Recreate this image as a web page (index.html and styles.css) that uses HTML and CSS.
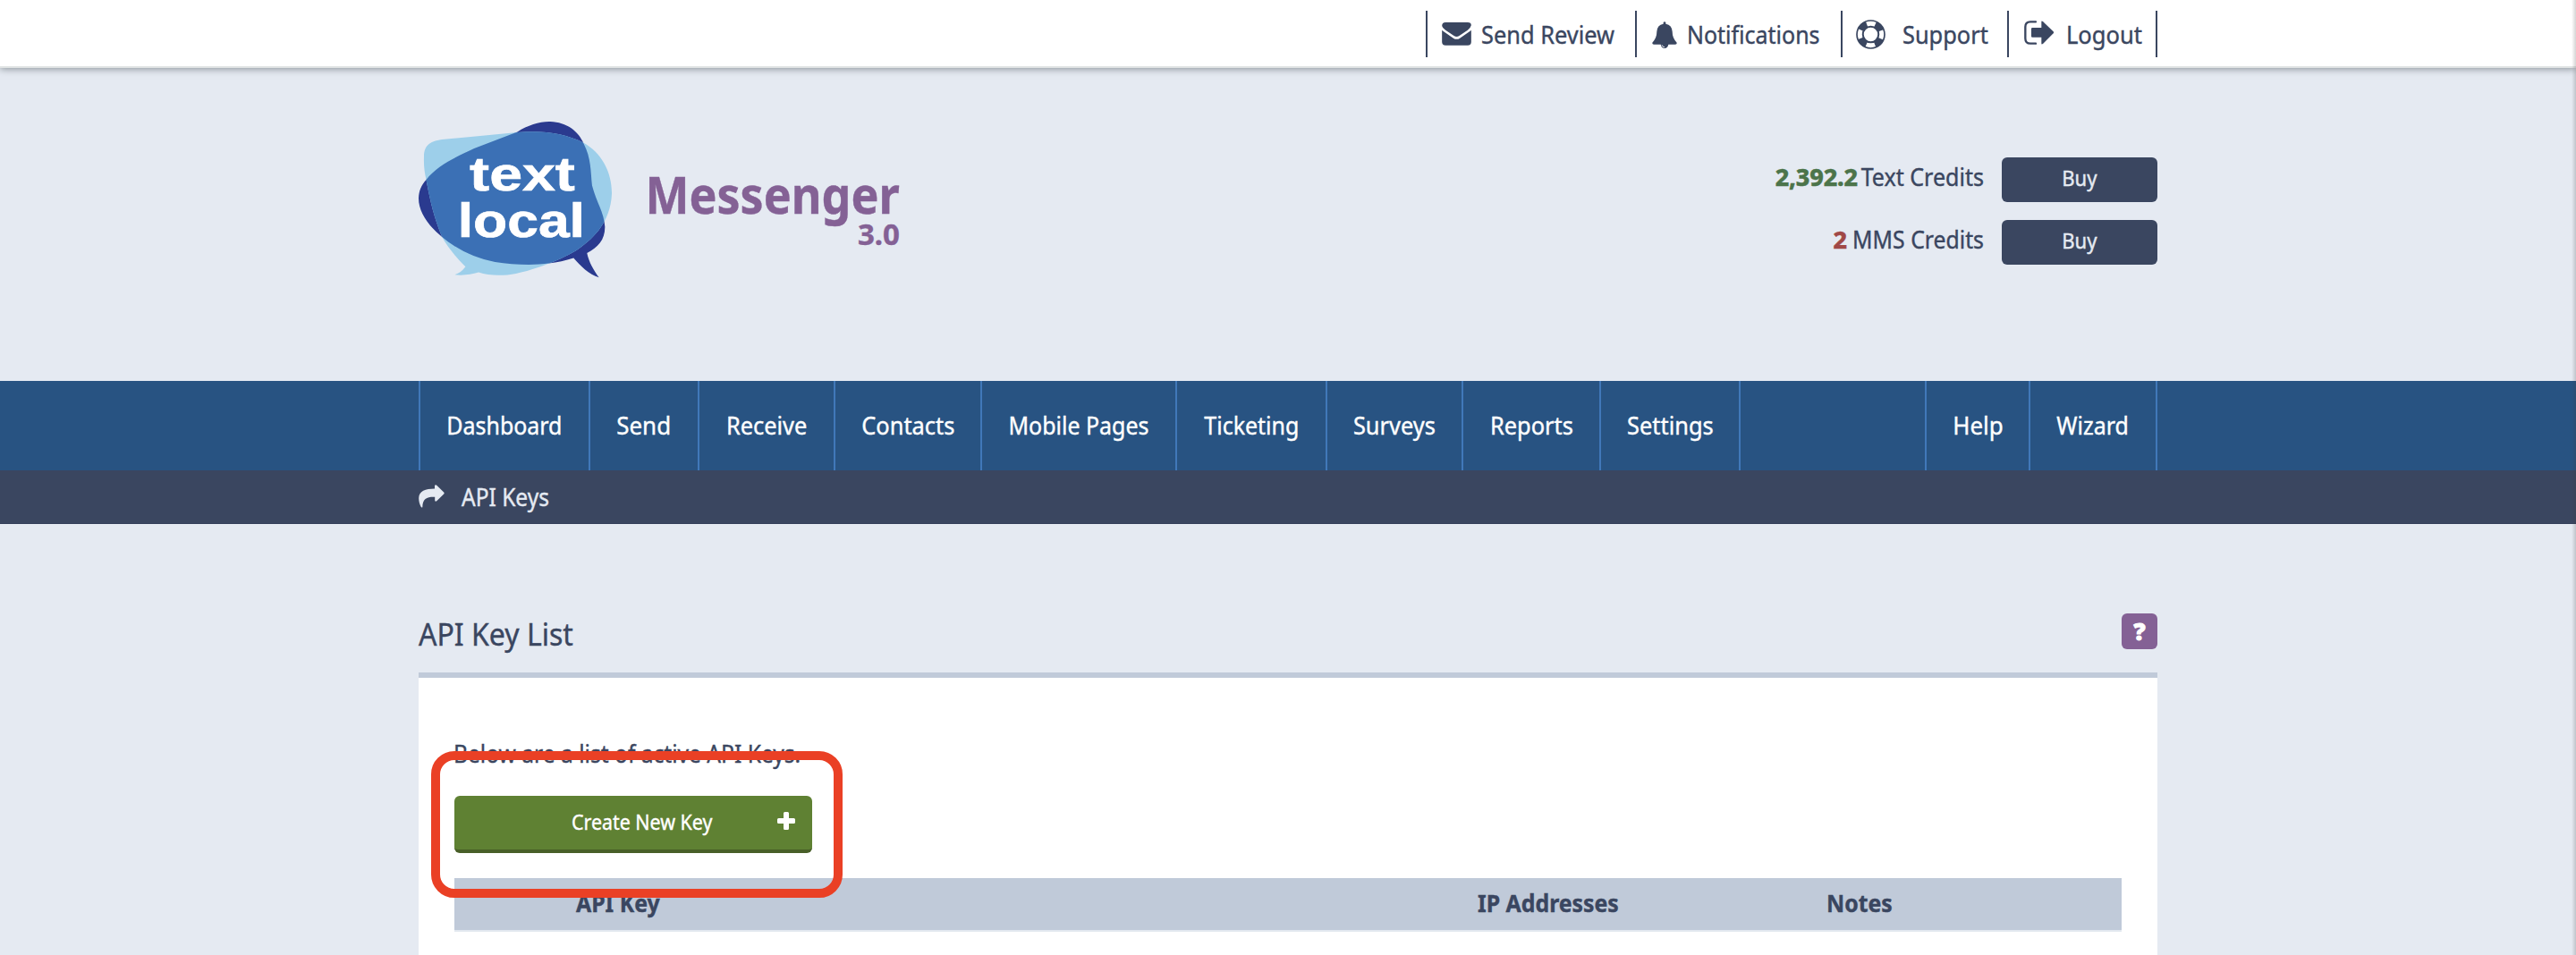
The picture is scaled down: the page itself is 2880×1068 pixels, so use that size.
FILE: index.html
```html
<!DOCTYPE html>
<html lang="en">
<head>
<meta charset="utf-8">
<title>API Keys</title>
<link rel="stylesheet" href="styles.css">
</head>
<body>
<header class="topbar">
  <div class="wrap topbar-inner">
    <a class="top-link review"><svg class="icon" width="33" height="26" viewBox="0 0 98 78"><path d="M0 12Q0 0 12 0H86Q98 0 98 10Q96 19 86 26L58 45Q49 51 40 45L12 26Q1 19 0 12ZM0 26Q4 30 10 34L38 53Q49 60 60 53L88 34Q94 30 98 26V66Q98 77 86 77H12Q0 77 0 66Z"/></svg><span class="t">Send Review</span></a>
    <a class="top-link notif"><svg class="icon" width="28" height="30" viewBox="0 0 84 90"><path d="M38 3Q42 -1 46 3V8Q67 12 68 34Q68 56 83 71Q84 77 78 77H55Q52 90 42 90Q32 90 29 77H6Q0 77 1 71Q16 56 16 34Q17 12 38 8Z"/><path class="clapper" d="M33 79Q35 86 42 86"/></svg><span class="t">Notifications</span></a>
    <a class="top-link support"><svg class="icon ring" width="33" height="33" viewBox="0 0 98 98"><circle cx="49" cy="49" r="46" stroke-width="5"/><circle cx="49" cy="49" r="26" stroke-width="6"/><circle cx="49" cy="49" r="36" stroke-width="22" stroke-dasharray="28 28.55" stroke-dashoffset="-14.27"/></svg><span class="t">Support</span></a>
    <a class="top-link logout"><svg class="icon" width="33" height="27" viewBox="0 0 99 81"><path class="door" d="M39 4H21Q4 4 4 21V60Q4 77 21 77H39"/><path d="M24 27Q24 24 28 24H58V4Q58 -1 63 3L98 37Q101 40 98 43L63 78Q58 81 58 77V56H28Q24 56 24 53Z"/></svg><span class="t">Logout</span></a>
  </div>
</header>

<div class="wrap brand">
  <svg class="logo" width="217" height="175" viewBox="54 48 650 524">
    <defs><clipPath id="front"><path d="M54 305C55 280 62 262 80 242C120 190 190 162 240 138L385 82C420 60 460 47 495 48C550 50 590 80 607 122C632 170 630 215 635 262C650 320 675 350 678 400C678 445 655 468 618 488C625 520 640 545 658 570C625 562 595 530 573 505C545 513 520 520 490 523C440 530 370 528 310 518C240 505 180 475 130 432C85 395 54 350 54 305Z"/></clipPath></defs>
    <path class="bubble-dark" d="M54 305C55 280 62 262 80 242C120 190 190 162 240 138L385 82C420 60 460 47 495 48C550 50 590 80 607 122C632 170 630 215 635 262C650 320 675 350 678 400C678 445 655 468 618 488C625 520 640 545 658 570C625 562 595 530 573 505C545 513 520 520 490 523C440 530 370 528 310 518C240 505 180 475 130 432C85 395 54 350 54 305Z"/>
    <path class="bubble-light" d="M72 165C72 125 95 112 140 107L385 84C470 76 545 88 605 118C665 150 702 215 701 290C697 380 645 435 590 474C540 508 440 545 380 557C340 565 290 565 255 553C230 560 205 564 175 561C190 556 200 548 211 534C180 505 150 465 133 435C105 370 90 300 80 245C73 215 71 195 72 165Z"/>
    <path class="bubble-mid" clip-path="url(#front)" d="M72 165C72 125 95 112 140 107L385 84C470 76 545 88 605 118C665 150 702 215 701 290C697 380 645 435 590 474C540 508 440 545 380 557C340 565 290 565 255 553C230 560 205 564 175 561C190 556 200 548 211 534C180 505 150 465 133 435C105 370 90 300 80 245C73 215 71 195 72 165Z"/>
    <text class="logo-text" x="225" y="280" textLength="353" lengthAdjust="spacingAndGlyphs">text</text>
    <text class="logo-text" x="185" y="434" textLength="426" lengthAdjust="spacingAndGlyphs">local</text>
  </svg>
  <div class="product"><span class="name">Messenger</span><span class="version">3.0</span></div>
  <div class="credits">
    <div class="credit-row"><strong class="good">2,392.2</strong><span class="credit-label">Text Credits</span><a class="buy"><span class="t">Buy</span></a></div>
    <div class="credit-row"><strong class="low">2</strong><span class="credit-label mms">MMS Credits</span><a class="buy"><span class="t">Buy</span></a></div>
  </div>
</div>

<nav class="mainnav">
  <div class="wrap nav-inner">
    <a class="w-dashboard"><span class="t tight">Dashboard</span></a>
    <a class="w-send"><span class="t wide">Send</span></a>
    <a class="w-receive"><span class="t">Receive</span></a>
    <a class="w-contacts"><span class="t">Contacts</span></a>
    <a class="w-mobile"><span class="t tight">Mobile Pages</span></a>
    <a class="w-ticketing"><span class="t tight">Ticketing</span></a>
    <a class="w-surveys"><span class="t">Surveys</span></a>
    <a class="w-reports"><span class="t">Reports</span></a>
    <a class="w-settings"><span class="t">Settings</span></a>
    <a class="w-help"><span class="t wide">Help</span></a>
    <a class="w-wizard"><span class="t tight">Wizard</span></a>
  </div>
</nav>
<div class="crumbs">
  <div class="wrap crumbs-inner">
    <svg class="crumb-icon" width="29" height="26" viewBox="467.5 542.5 29 26"><path d="M485.5 543.5Q486.5 542 488 543.5L495.7 551Q496.6 552 495.7 553L488 560.5Q486.5 562 485.7 560.5V556.3C477 556 472 558 471.8 567.7Q470.8 568.3 470 567C468.5 564 467.7 561 467.7 557.5C468 549.5 475 547.2 485.5 547Z"/></svg>
    <span class="t">API Keys</span>
  </div>
</div>

<main class="wrap">
  <div class="title-row">
    <h1 class="t">API Key List</h1>
    <a class="help"><span>?</span></a>
  </div>
  <section class="panel">
    <p class="intro t">Below are a list of active API Keys.</p>
    <div class="create-row">
      <a class="create"><span class="t">Create New Key</span><svg class="plus" width="20" height="20" viewBox="0 0 20 20"><path d="M8.500 0h3q1.500 0 1.500 1.500V7h5.500q1.500 0 1.500 1.500v3q0 1.500-1.500 1.500H13v5.500q0 1.500-1.500 1.500h-3Q7 20 7 18.500V13H1.500Q0 13 0 11.500v-3Q0 7 1.500 7H7V1.500Q7 0 8.500 0z"/></svg></a>
      <div class="highlight"></div>
    </div>
    <div class="table-head"><span class="t">API Key</span><span class="t">IP Addresses</span><span class="t">Notes</span></div>
  </section>
</main>
<div class="edge"></div>
</body>
</html>
```
FILE: styles.css
```css
* { box-sizing: border-box; }
body {
  margin: 0;
  height: 1068px;
  overflow: hidden;
  position: relative;
  background: #e5eaf2;
  color: #3a4660;
  font: 27px/1 "Noto Sans", "Open Sans", sans-serif;
  -webkit-text-stroke: .4px currentColor;
}
.wrap { width: 1944px; margin: 0 auto; }
.t {
  display: inline-block;
  white-space: nowrap;
  transform: scaleX(.94);
  transform-origin: left;
}
svg { display: block; flex: none; }

/* Top bar */
.topbar {
  height: 76px;
  background: #fff;
  border-bottom: 2px solid #e1e4e4;
  box-shadow: 0 1px 8px rgba(70, 80, 85, .6);
}
.topbar-inner { display: flex; justify-content: flex-end; padding-top: 12px; }
.top-link {
  display: flex;
  align-items: center;
  height: 52px;
  line-height: 51px;
  border-left: 2px solid #3a4660;
}
.top-link .icon { fill: #3a4660; }
.review { width: 234px; padding-left: 16px; }
.review .t { margin-left: 11px; }
.notif { width: 230px; padding-left: 17px; }
.notif .icon { margin-top: 2px; }
.notif .t { margin-left: 11px; transform: scaleX(.925); }
.support { width: 186px; padding-left: 15px; }
.support .t { margin-left: 19px; }
.logout { width: 168px; padding-left: 17px; border-right: 2px solid #3a4660; }
.logout .icon { margin-top: -3px; }
.logout .t { margin-left: 13.500px; transform: scaleX(.945); }
.top-link .ring { fill: none; stroke: #3a4660; }
.top-link .clapper { fill: none; stroke: #fff; stroke-width: 2.500px; }
.top-link .door { fill: none; stroke: #3a4660; stroke-width: 7px; stroke-linecap: round; }

/* Brand and credits */
.brand { height: 350px; padding-top: 60px; display: flex; align-items: flex-start; }
.bubble-dark { fill: #2a3a8f; }
.bubble-light { fill: #9dcfea; }
.bubble-mid { fill: #3b70b5; }
.logo-text { font: bold 163px "Liberation Sans", Arial, sans-serif; fill: #fff; stroke: #fff; stroke-width: 2px; }
.product {
  width: 280px;
  margin: 42px 0 0 41px;
  color: #846195;
  display: flex;
  flex-direction: column;
  align-items: flex-end;
}
.name {
  font-size: 57px;
  font-weight: 700;
  line-height: 78px;
  width: 312px;
  transform: scaleX(.912);
  transform-origin: right;
}
.version { font-size: 33px; font-weight: 700; line-height: 34px; margin-top: -11px; }
.credits { margin: 40px 0 0 auto; display: grid; gap: 20px; }
.credit-row { display: flex; justify-content: flex-end; height: 50px; line-height: 43px; }
.credit-row strong { font-weight: 800; letter-spacing: -.2px; }
.good { color: #4c744a; }
.low { color: #a04846; }
.credit-label { width: 148px; margin-left: -7px; white-space: nowrap; transform: scaleX(.928); transform-origin: right; }
.mms { width: 160px; margin-left: -7px; transform: scaleX(.918); }
.buy {
  width: 174px;
  height: 50px;
  margin-left: 20px;
  border-radius: 6px;
  background: #3a4660;
  color: #e5eaf2;
  font-size: 23.500px;
  line-height: 47px;
  text-align: center;
}
.buy .t { transform-origin: center; }

/* Main navigation */
.mainnav { height: 100px; background: #285382; }
.nav-inner { display: flex; }
.nav-inner a {
  height: 100px;
  line-height: 99px;
  border-left: 2px solid #4178b9;
  text-align: center;
  color: #fff;
}
.nav-inner .t { transform-origin: center; }
.nav-inner .wide { transform: scaleX(.96); }
.nav-inner .tight { transform: scaleX(.924); }
.w-dashboard { width: 190px; }
.w-send { width: 122px; }
.w-receive { width: 152px; }
.w-contacts { width: 164px; }
.w-mobile { width: 218px; }
.w-ticketing { width: 168px; }
.w-surveys { width: 152px; }
.w-reports { width: 154px; }
.nav-inner .w-settings { width: 158px; border-right: 2px solid #4178b9; }
.w-help { width: 116px; margin-left: auto; }
.nav-inner .w-wizard { width: 144px; border-right: 2px solid #4178b9; }

.crumbs { height: 60px; background: #3a4660; border-bottom: 1px solid #333e59; color: #e5eaf2; }
.crumbs-inner { display: flex; line-height: 59px; }
.crumb-icon { margin-top: 16px; fill: #e5eaf2; }
.crumbs .t { margin-left: 19px; transform: scaleX(.908); }

/* Content */
.title-row { height: 166px; display: flex; justify-content: space-between; padding-top: 100px; }
h1 { margin: 0; font-size: 35px; font-weight: 400; line-height: 45px; height: 45px; }
h1.t { transform: scaleX(.915); }
.help {
  width: 40px;
  height: 40px;
  border-radius: 6px;
  background: #846195;
  color: #fff;
  font: 900 26px/41px "Noto Sans", sans-serif;
  -webkit-text-stroke: 1px #fff;
  text-align: center;
}
.panel { height: 316px; border-top: 6px solid #c0cad9; background: #fff; padding: 64px 40px 0; }
.intro { margin: 0 0 0 -1px; line-height: 42px; height: 68px; }
.intro.t { display: block; transform: scaleX(.911); }
.create-row { position: relative; height: 92px; }
.create {
  display: block;
  position: relative;
  width: 400px;
  height: 64px;
  border-radius: 6px;
  border-bottom: 4px solid #485f28;
  background: #5f8133;
  color: #fff;
  font-size: 23.500px;
  line-height: 59px;
  padding-left: 131px;
}
.create .t { transform: scaleX(.91); }
.plus { position: absolute; left: 361px; top: 18px; fill: #fff; }
.highlight {
  position: absolute;
  z-index: 1;
  left: -26px;
  top: -50px;
  width: 460px;
  height: 164px;
  border: 10px solid #ea4025;
  border-radius: 26px;
}
.table-head {
  display: grid;
  grid-template-columns: 1008px 390px auto;
  padding-left: 136px;
  height: 60px;
  line-height: 56px;
  background: #c0cad9;
  border-bottom: 2px solid #e2e8ef;
  font-weight: 700;
}
.table-head .t { transform: scaleX(.92); }

/* Soft shade along the window's right side */
.edge {
  position: absolute;
  top: 0;
  right: 0;
  width: 5px;
  height: 100%;
  background: linear-gradient(to right, rgba(60, 60, 60, 0), rgba(60, 60, 60, .22));
}
```
